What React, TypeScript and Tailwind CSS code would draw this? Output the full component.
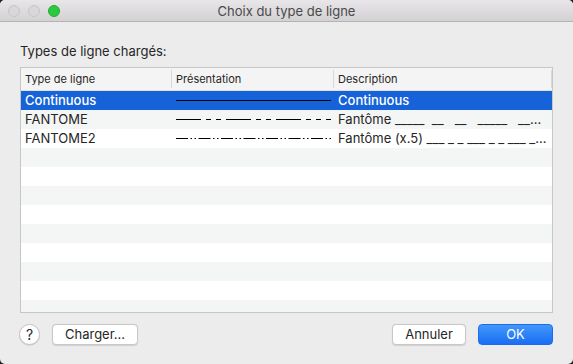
import React from "react";

type Row = { name: string; pattern: "cont" | "f1" | "f2"; desc: string };

const rows: Row[] = [
  { name: "Continuous", pattern: "cont", desc: "Continuous" },
  { name: "FANTOME", pattern: "f1", desc: "Fantôme _____  __   __   _____   __…" },
  { name: "FANTOME2", pattern: "f2", desc: "Fantôme (x.5) ___ _ _ ___ _ _ ___ _…" },
];

function LinePattern({ kind }: { kind: Row["pattern"] }) {
  const dash =
    kind === "cont" ? undefined : kind === "f1" ? "25 5 5 5 5 5" : "12 2.5 1.5 2.5 1.5 2.5";
  return (
    <svg width="155" height="3" viewBox="0 0 155 3" className="block">
      <line x1="0" y1="1.5" x2="155" y2="1.5" stroke="#000" strokeWidth="1" strokeDasharray={dash} />
    </svg>
  );
}

export default function App() {
  const font = { fontFamily: "Inter, 'Noto Sans', sans-serif" };
  const empty = Array.from({ length: 10 });
  return (
    <div className="w-[573px] h-[364px] bg-[#1e1e1e] overflow-hidden" style={font}>
      <div className="w-[573px] h-[364px] rounded-[5px] overflow-hidden bg-[#ececec] flex flex-col">
        {/* Title bar */}
        <div className="h-[22px] shrink-0 relative flex items-center justify-center bg-gradient-to-b from-[#e8e6e8] to-[#d3d1d3] border-b border-[#b4b4b4]">
          <div className="absolute left-[8px] top-[5px] flex gap-[8px]">
            <div className="w-[12px] h-[12px] rounded-full bg-[#d9d7d9] border border-[#c6c4c6]" />
            <div className="w-[12px] h-[12px] rounded-full bg-[#d9d7d9] border border-[#c6c4c6]" />
            <div className="w-[12px] h-[12px] rounded-full bg-[#2bc840] border border-[#22ad33]" />
          </div>
          <span className="text-[13px] leading-[16px] text-[#4a4a4a]">Choix du type de ligne</span>
        </div>

        {/* Body */}
        <div className="flex-1 flex flex-col px-[20px] pt-[21px]">
          <div className="text-[13px] leading-[16px] text-[#262626] h-[16px]">Types de ligne chargés:</div>
          <div className="mt-[8px] h-[246px] w-[533px] border border-[#c6c6c6] bg-white overflow-hidden flex flex-col">
            {/* Header */}
            <div className="h-[23px] shrink-0 flex bg-[#f4f4f4] border-b border-[#e0e0e0] text-[11px] text-[#262626]">
              <div className="w-[150px] flex items-center pl-[4px]">Type de ligne</div>
              <div className="w-px my-[2px] bg-[#d8d8d8]" />
              <div className="w-[161px] flex items-center pl-[4px]">Présentation</div>
              <div className="w-px my-[2px] bg-[#d8d8d8]" />
              <div className="flex-1 flex items-center pl-[4px]">Description</div>
              <div className="w-px my-[2px] bg-[#d8d8d8]" />
            </div>
            {rows.map((r, i) => {
              const sel = i === 0;
              const bg = sel ? "bg-[#1663d9] text-white" : i % 2 === 1 ? "bg-[#f4f5f5] text-[#262626]" : "bg-white text-[#262626]";
              return (
                <div key={r.name} className={`h-[19px] shrink-0 flex items-center text-[13px] ${bg}`}>
                  <div className={`w-[150px] pl-[4px] ${sel ? "font-medium" : ""}`}>{r.name}</div>
                  <div className="w-px" />
                  <div className="w-[161px] pl-[4px]">
                    <LinePattern kind={r.pattern} />
                  </div>
                  <div className="w-px" />
                  <div className={`flex-1 pl-[4px] whitespace-pre overflow-hidden ${sel ? "font-medium" : ""}`}>{r.desc}</div>
                </div>
              );
            })}
            {empty.map((_, j) => {
              const i = j + 3;
              return <div key={i} className={`h-[19px] shrink-0 ${i % 2 === 1 ? "bg-[#f4f5f5]" : "bg-white"}`} />;
            })}
          </div>

          {/* Buttons */}
          <div className="mt-[11px] flex items-center">
            <div className="-ml-px w-[21px] h-[21px] rounded-full bg-white border border-[#c4c4c4] shadow-[0_0.5px_1px_rgba(0,0,0,0.15)] flex items-center justify-center text-[14px] text-[#262626]">
              ?
            </div>
            <div className="ml-[12px] w-[86px] h-[21px] rounded-[4px] bg-white border border-[#c8c8c8] shadow-[0_0.5px_1px_rgba(0,0,0,0.12)] flex items-center justify-center text-[13px] text-[#262626]">
              Charger...
            </div>
            <div className="flex-1" />
            <div className="w-[74px] h-[21px] rounded-[4px] bg-white border border-[#c8c8c8] shadow-[0_0.5px_1px_rgba(0,0,0,0.12)] flex items-center justify-center text-[13px] text-[#262626]">
              Annuler
            </div>
            <div className="ml-[12px] w-[75px] h-[21px] rounded-[4px] bg-gradient-to-b from-[#4197f9] to-[#1a6ef4] border border-[#1d6cf0] flex items-center justify-center text-[13px] text-white">
              OK
            </div>
          </div>
        </div>
      </div>
    </div>
  );
}
